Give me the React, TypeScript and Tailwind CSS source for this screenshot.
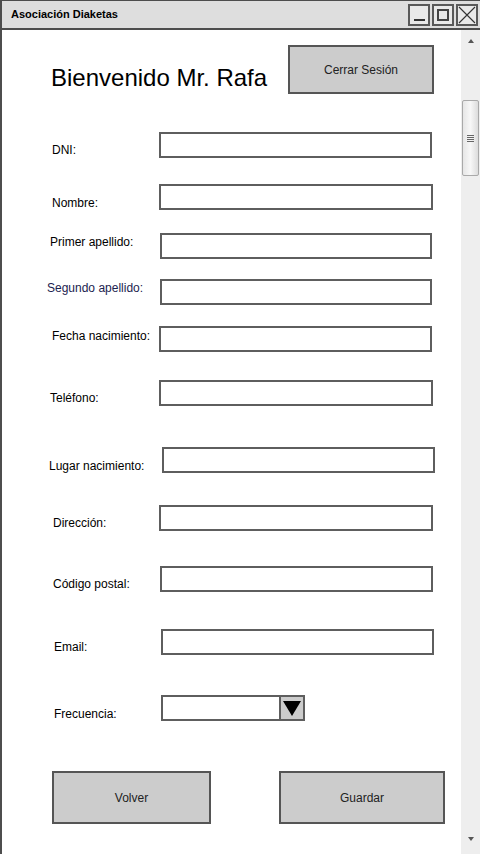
import React from "react";

const font = "font-['Liberation_Sans',Arial,sans-serif]";

type Row = {
  label: string;
  row: string;
  lab: string;
  input: string;
  tone?: string;
  select?: boolean;
};

const rows: Row[] = [
  { label: "DNI:", row: "mt-[38px]", lab: "ml-[50px] w-[107px] mt-[10px]", input: "w-[273px]" },
  { label: "Nombre:", row: "mt-[26px]", lab: "ml-[50px] w-[107px] mt-[11px]", input: "w-[274px]" },
  { label: "Primer apellido:", row: "mt-[23px]", lab: "ml-[48px] w-[110px] mt-[1px]", input: "w-[272px]" },
  {
    label: "Segundo apellido:",
    row: "mt-[20px]",
    lab: "ml-[45px] w-[113px] mt-[1px]",
    input: "w-[272px]",
    tone: "text-[#1c2350]",
  },
  { label: "Fecha nacimiento:", row: "mt-[21px]", lab: "ml-[50px] w-[107px] mt-[2px]", input: "w-[273px]" },
  { label: "Teléfono:", row: "mt-[28px]", lab: "ml-[48px] w-[109px] mt-[10px]", input: "w-[274px]" },
  { label: "Lugar nacimiento:", row: "mt-[41px]", lab: "ml-[47px] w-[113px] mt-[11px]", input: "w-[273px]" },
  { label: "Dirección:", row: "mt-[32px]", lab: "ml-[51px] w-[106px] mt-[10px]", input: "w-[274px]" },
  { label: "Código postal:", row: "mt-[35px]", lab: "ml-[51px] w-[107px] mt-[10px]", input: "w-[273px]" },
  { label: "Email:", row: "mt-[37px]", lab: "ml-[52px] w-[107px] mt-[10px]", input: "w-[273px]" },
  { label: "Frecuencia:", row: "mt-[40px]", lab: "ml-[52px] w-[107px] mt-[11px]", input: "w-[144px]", select: true },
];

function WinButton({ children }: { children: React.ReactNode }) {
  return (
    <div className="flex h-[22px] w-[22px] items-center justify-center border-2 border-[#595959] bg-[#e9e9e9]">
      {children}
    </div>
  );
}

function TitleBar() {
  return (
    <div className="flex h-[30px] shrink-0 items-center border-t border-l-2 border-b-2 border-[#4d4d4d] bg-[#dedede]">
      <span className="ml-[9px] text-[11px] font-bold text-black">Asociación Diaketas</span>
      <div className="ml-auto mr-[2px] flex gap-[2px]">
        <WinButton>
          <div className="mt-[10px] h-[2px] w-[11px] bg-[#333]" />
        </WinButton>
        <WinButton>
          <div className="h-[12px] w-[12px] border-2 border-[#444]" />
        </WinButton>
        <WinButton>
          <svg width="18" height="18" viewBox="0 0 18 18">
            <path d="M1 1 L17 17 M17 1 L1 17" stroke="#333" strokeWidth="1.1" fill="none" />
          </svg>
        </WinButton>
      </div>
    </div>
  );
}

function Scrollbar() {
  return (
    <div className="flex w-[19px] shrink-0 flex-col items-center bg-[#eeeeee]">
      <div className="mt-[9px] h-0 w-0 border-x-[3px] border-b-[4px] border-x-transparent border-b-[#555]" />
      <div className="mt-[57px] flex h-[76px] w-[17px] items-center justify-center rounded-[2px] border border-[#a9a9a9] bg-gradient-to-r from-[#e6e6e6] via-[#f7f7f7] to-[#dcdcdc]">
        <div className="flex flex-col gap-[1px]">
          <div className="h-[1px] w-[7px] bg-[#666]" />
          <div className="h-[1px] w-[7px] bg-[#666]" />
          <div className="h-[1px] w-[7px] bg-[#666]" />
          <div className="h-[1px] w-[7px] bg-[#666]" />
        </div>
      </div>
      <div className="flex-1" />
      <div className="mb-[13px] h-0 w-0 border-x-[3px] border-t-[4px] border-x-transparent border-t-[#555]" />
    </div>
  );
}

function Field({ r }: { r: Row }) {
  return (
    <div className={`flex h-[26px] items-start ${r.row}`}>
      <span className={`shrink-0 whitespace-nowrap text-[12px] leading-4 ${r.tone ?? "text-black"} ${r.lab}`}>
        {r.label}
      </span>
      {r.select ? (
        <div className={`flex h-[26px] shrink-0 border-2 border-[#5e5e5e] bg-white ${r.input}`}>
          <div className="flex-1" />
          <div className="flex w-[24px] items-center justify-center border-l-2 border-[#5e5e5e] bg-[#cccccc]">
            <div className="mt-[1px] h-0 w-0 border-x-[9px] border-t-[15px] border-x-transparent border-t-black" />
          </div>
        </div>
      ) : (
        <div className={`h-[26px] shrink-0 border-2 border-[#5e5e5e] bg-white ${r.input}`} />
      )}
    </div>
  );
}

export default function App() {
  return (
    <div className={`flex h-[854px] w-[480px] flex-col overflow-hidden bg-white ${font}`}>
      <TitleBar />
      <div className="flex min-h-0 flex-1">
        <main className="flex min-w-0 flex-1 flex-col border-l-2 border-[#4d4d4d]">
          <header className="mt-[15px] flex items-start">
            <h1 className="ml-[49px] mt-[19px] text-[24px] leading-[28px] text-black">Bienvenido Mr. Rafa</h1>
            <button className="ml-auto mr-[27px] h-[49px] w-[146px] border-2 border-[#555] bg-[#cccccc] text-[12px] text-[#222]">
              Cerrar Sesión
            </button>
          </header>

          {rows.map((r) => (
            <Field key={r.label} r={r} />
          ))}

          <div className="mt-[50px] flex">
            <button className="ml-[50px] h-[53px] w-[159px] border-2 border-[#555] bg-[#cccccc] text-[12px] text-[#222]">
              Volver
            </button>
            <button className="ml-[68px] h-[53px] w-[166px] border-2 border-[#555] bg-[#cccccc] text-[12px] text-[#222]">
              Guardar
            </button>
          </div>
        </main>
        <Scrollbar />
      </div>
    </div>
  );
}
